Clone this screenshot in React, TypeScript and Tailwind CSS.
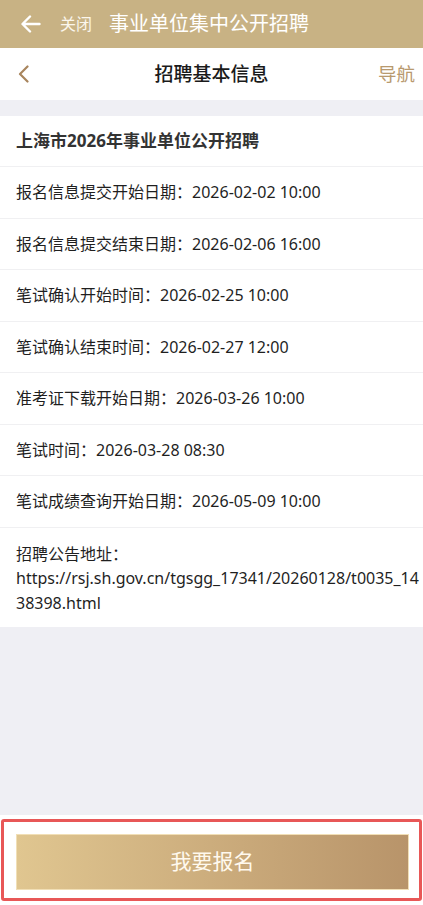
const font = { fontFamily: '"Noto Sans", "Noto Sans CJK SC", sans-serif' };

const rows = [
  { label: "报名信息提交开始日期", value: "2026-02-02 10:00" },
  { label: "报名信息提交结束日期", value: "2026-02-06 16:00" },
  { label: "笔试确认开始时间", value: "2026-02-25 10:00" },
  { label: "笔试确认结束时间", value: "2026-02-27 12:00" },
  { label: "准考证下载开始日期", value: "2026-03-26 10:00" },
  { label: "笔试时间", value: "2026-03-28 08:30" },
  { label: "笔试成绩查询开始日期", value: "2026-05-09 10:00" },
];

export default function App() {
  return (
    <div className="flex h-[905px] w-[423px] flex-col overflow-hidden bg-[#efeff4]" style={font}>
      {/* app bar */}
      <div className="flex h-[48px] shrink-0 items-center bg-[#c8b284] pl-[21px]">
        <svg width="20" height="18" viewBox="0 0 20 18" fill="none" stroke="#ffffff" strokeWidth="2.4" strokeLinecap="round" strokeLinejoin="round">
          <path d="M18.5 9H2M9 1.5L1.5 9L9 16.5" />
        </svg>
        <span className="ml-[19px] text-[16px] text-[#fbf6ec]">关闭</span>
        <span className="ml-[17px] text-[20px] text-white">事业单位集中公开招聘</span>
      </div>

      {/* page nav */}
      <div className="relative flex h-[52px] shrink-0 items-center bg-white">
        <svg className="ml-[18px]" width="11" height="18" viewBox="0 0 11 18" fill="none" stroke="#a8855d" strokeWidth="2.2" strokeLinecap="round" strokeLinejoin="round">
          <path d="M9.5 1.5L2 9l7.5 7.5" />
        </svg>
        <span className="absolute left-1/2 -translate-x-1/2 text-[19px] font-medium text-[#1a1a1a]">招聘基本信息</span>
        <span className="ml-auto mr-[8px] text-[18.5px] text-[#b8996e]">导航</span>
      </div>

      <div className="h-[16px] shrink-0" />

      {/* info card */}
      <div className="shrink-0 bg-white">
        <div className="flex h-[51px] items-center border-b border-[#f0f0f2] px-[16px] text-[17px] font-bold text-[#333333]">
          上海市2026年事业单位公开招聘
        </div>
        {rows.map((r) => (
          <div key={r.label} className="flex h-[51.5px] items-center border-b border-[#f0f0f2] px-[16px] text-[16px] text-[#1f1f1f]">
            {r.label}：{r.value}
          </div>
        ))}
        <div className="px-[16px] pb-[12px] pt-[14px] text-[16px] leading-[24.5px] text-[#1f1f1f]">
          <div>招聘公告地址：</div>
          <div>https://rsj.sh.gov.cn/tgsgg_17341/20260128/t0035_14</div>
          <div>38398.html</div>
        </div>
      </div>

      <div className="flex-1" />

      {/* bottom bar */}
      <div className="relative h-[90px] shrink-0 bg-white pl-[16px] pr-[14px] pt-[19px]">
        <button
          type="button"
          className="flex h-[56px] w-full items-center justify-center border border-[#f1dfb6] bg-gradient-to-r from-[#e0c690] to-[#b8946a] text-[21px] text-[#fff9ee]"
        >
          我要报名
        </button>
        <div className="pointer-events-none absolute left-[1px] top-[4px] h-[82px] w-[421px] rounded-[3px] border-[3px] border-[#e85757]" />
      </div>
    </div>
  );
}
